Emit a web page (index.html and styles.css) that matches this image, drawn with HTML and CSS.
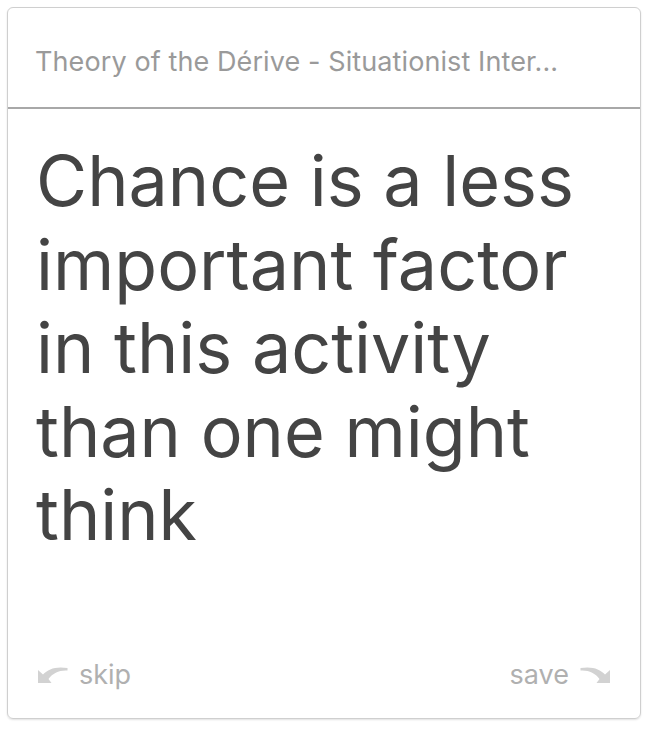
FILE: index.html
```html
<!DOCTYPE html>
<html>
<head>
<meta charset="utf-8">
<link rel="stylesheet" href="styles.css">
</head>
<body>
<div class="card">
  <div class="header">Theory of the Dérive - Situationist Inter...</div>
  <div class="quote">Chance is a less important factor in this activity than one might think</div>
  <div class="footer">
    <div class="action">
      <svg class="icon" width="30" height="18" viewBox="0 0 30 18"><path d="M0 17 L0 4 L5 8.5 C10 3 18 0 29.5 2 L29.5 4.5 C21 4 15 7 10.5 13 L13.5 17 Z" fill="#d2d2d2"/></svg>
      <span>skip</span>
    </div>
    <div class="action">
      <span>save</span>
      <svg class="icon" width="30" height="18" viewBox="0 0 30 18"><path d="M30 17 L30 4 L25 8.5 C20 3 12 0 0.5 2 L0.5 4.5 C9 4 15 7 19.5 13 L16.5 17 Z" fill="#d2d2d2"/></svg>
    </div>
  </div>
</div>
</body>
</html>
```
FILE: styles.css
```css
html, body { margin: 0; padding: 0; background: #fff; }
body { padding: 7px; }
.card {
  width: 634px;
  height: 712px;
  box-sizing: border-box;
  border: 1px solid #cfcfcf;
  border-radius: 6px;
  box-shadow: 0 1px 2px rgba(0,0,0,0.12);
  display: flex;
  flex-direction: column;
  font-family: Inter, "Noto Sans", sans-serif;
}
.header {
  height: 101px;
  box-sizing: border-box;
  border-bottom: 2px solid #a8a8a8;
  padding: 37px 27px 0 27px;
  font-size: 27px;
  color: #9a9a9a;
  white-space: nowrap;
  letter-spacing: 0.1px;
}
.quote {
  flex: 1;
  padding: 30px 28px 0 28px;
  font-size: 70px;
  line-height: 83.5px;
  color: #444;
}
.footer {
  display: flex;
  justify-content: space-between;
  align-items: center;
  padding: 0 30px 27px 30px;
  font-size: 27px;
  color: #b0b0b0;
}
.action { display: flex; align-items: center; gap: 11px; }
.icon { display: block; }
```
